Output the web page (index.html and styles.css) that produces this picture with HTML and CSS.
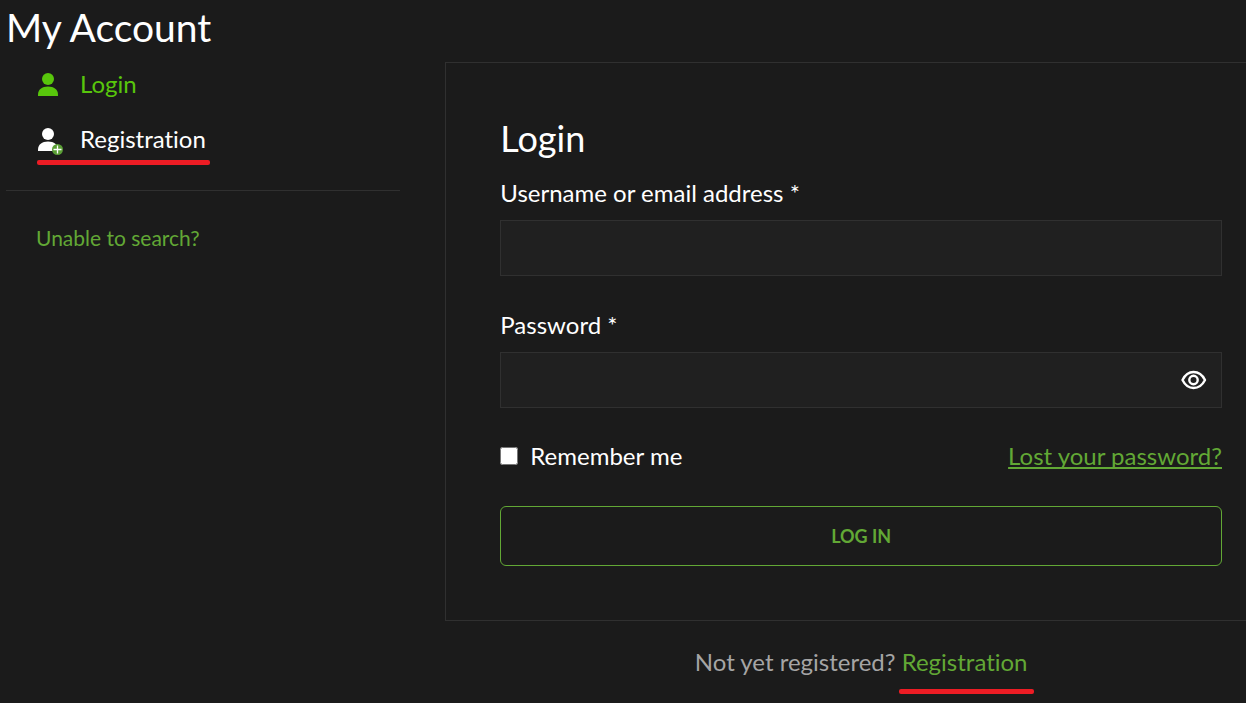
FILE: index.html
```html
<!DOCTYPE html>
<html lang="en">
<head>
    <meta charset="utf-8">
    <meta name="viewport" content="width=device-width, initial-scale=1">
    <title>My Account</title>
    <link rel="stylesheet" href="styles.css">
</head>
<body>
    <h1>My Account</h1>

    <div class="account">
        <aside class="sidebar">
            <nav class="menu">
                <a href="#login" class="menu-link active">
                    <svg class="icon" viewBox="0 0 26 26" aria-hidden="true">
                        <circle cx="12" cy="8" r="6" fill="currentColor"/>
                        <path d="M2 25v-1.500C2 18.500 6 15.500 12 15.500S22 18.500 22 23.500V25z" fill="currentColor"/>
                    </svg>
                    Login
                </a>
                <a href="#registration" class="menu-link marked">
                    <svg class="icon" viewBox="0 0 26 26" aria-hidden="true">
                        <circle cx="12" cy="8" r="6" fill="currentColor"/>
                        <path d="M2 25v-1.500C2 18.500 6 15.500 12 15.500S22 18.500 22 23.500V25z" fill="currentColor"/>
                        <circle cx="21.500" cy="23.500" r="5.500" fill="#5a9e35"/>
                        <path d="M21.500 19.500v8M17.500 23.500h8" stroke="#fff" stroke-width="1.300"/>
                    </svg>
                    Registration
                </a>
            </nav>
            <a href="#help" class="help">Unable to search?</a>
        </aside>

        <main class="content">
            <form class="card" id="login">
                <h2>Login</h2>
                <div class="field">
                    <label for="username">Username or email address *</label>
                    <input type="text" id="username" class="input" name="username" autocomplete="username">
                </div>
                <div class="field">
                    <label for="password">Password *</label>
                    <div class="input password">
                        <input type="password" id="password" name="password" autocomplete="current-password">
                        <button type="button" class="toggle" aria-label="Show password">
                            <svg viewBox="0 0 26 20" aria-hidden="true" fill="none" stroke="currentColor">
                            <path d="M1.500 10C4 5 8 2 12.500 2S21.500 5 24 10C21.500 15 17 18 12.500 18S4 15 1.500 10z" stroke-width="2.400" stroke-linejoin="round"/>
                            <circle cx="12.500" cy="10" r="4.200" stroke-width="2.400"/>
                            </svg>
                        </button>
                    </div>
                </div>
                <div class="options">
                    <label class="remember"><input type="checkbox" name="remember"> Remember me</label>
                    <a href="#lost" class="lost">Lost your password?</a>
                </div>
                <button type="submit" class="submit">Log in</button>
            </form>
            <p class="register">Not yet registered? <a href="#registration" class="marked">Registration</a></p>
        </main>
    </div>
</body>
</html>
```

FILE: styles.css
```css
* { box-sizing: border-box; }
body { margin: 0; padding: 3px 0 0 6px; background: #1b1b1b; color: #fff; font: 24px/32px Lato, sans-serif; font-variant-ligatures: none; }
a { color: #62a835; text-decoration: none; }
h1, h2, p { margin: 0; font-weight: 400; }
h1 { font-size: 39px; line-height: 48px; margin-bottom: 11px; }
h2 { font-size: 36px; line-height: 44px; margin-bottom: 17px; }

.account { display: grid; grid-template-columns: 33fr 67fr; column-gap: 45px; align-items: start; }

/* sidebar */
.menu { display: flex; flex-direction: column; align-items: flex-start; gap: 23px; padding: 6px 30px 25px; border-bottom: 1px solid #303030; }
.menu-link { display: grid; grid-template-columns: 26px auto; column-gap: 18px; align-items: center; color: #fff; }
.menu-link.active { color: #58c60c; }
.icon { width: 26px; height: 26px; overflow: visible; }
.help { display: inline-block; margin: 31px 30px; font-size: 21px; }

/* red bar under the registration links */
.marked::after { content: ""; display: block; height: 5px; border-radius: 2px; background: #ed1c24; }
.menu .marked::after { grid-column: 1 / -1; margin: 5px -4px 0 1px; }

/* login form */
.card { padding: 53px 24px 54px 54px; border: 1px solid #303030; border-right: 0; }
.field + .field { margin-top: 33px; }
.field label { display: block; margin-bottom: 11px; }
.input { display: block; width: 100%; height: 56px; padding: 0 14px; background: #202020; border: 1px solid #303030; color: #fff; font: inherit; }
.password { display: flex; align-items: center; gap: 12px; }
.password input { flex: 1; min-width: 0; height: 100%; padding: 0; background: none; border: 0; outline: 0; color: inherit; font: inherit; }
.toggle { display: flex; padding: 0; background: none; border: 0; color: #fff; cursor: pointer; }
.toggle svg { width: 26px; height: 20px; }
.options { display: flex; justify-content: space-between; margin: 32px 0 34px; }
.remember { display: flex; align-items: center; gap: 12px; }
.remember input { width: 18px; height: 18px; margin: 0; }
.lost { text-decoration: underline; text-decoration-skip-ink: none; }
.submit { display: block; width: 100%; height: 60px; background: none; border: 1px solid #62a835; border-radius: 6px; color: #62a835; font: bold 18px Lato, sans-serif; text-transform: uppercase; cursor: pointer; }
.register { padding: 25px 24px 0 55px; color: #a5a5a5; text-align: center; }
.register .marked { display: inline-block; }
.register .marked::after { margin: 11px -6px 0 -3px; }
```
